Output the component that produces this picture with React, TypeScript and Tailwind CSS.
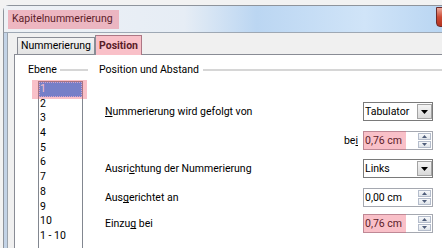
import { ReactNode } from "react";

function Mark({ className }: { className: string }) {
  return (
    <span
      className={`pointer-events-none absolute bg-[rgba(238,80,102,0.36)] ${className}`}
    />
  );
}

function Arrow({ up, color }: { up?: boolean; color: string }) {
  return (
    <svg width="5" height="3" viewBox="0 0 5 3">
      <path d={up ? "M0 3h5L2.5 0z" : "M0 0h5L2.5 3z"} fill={color} />
    </svg>
  );
}

function Combo({ value }: { value: string }) {
  return (
    <div className="flex h-[19px] w-[70px] items-center border border-[#7a7a7a] bg-white pl-px">
      <span className="flex-1">{value}</span>
      <span className="flex h-[15px] w-[15px] items-center justify-center border border-[#a3a3a3] bg-[linear-gradient(#f4f4f4,#d9d9d9)]">
        <svg width="7" height="4" viewBox="0 0 7 4">
          <path d="M0 0h7L3.5 4z" fill="#000" />
        </svg>
      </span>
    </div>
  );
}

function Spin({ value, marked }: { value: string; marked?: boolean }) {
  return (
    <div className="relative flex h-[19px] w-[70px] items-center border border-[#a5a8b0] bg-white pl-px">
      <span className="flex-1">{value}</span>
      <span className="mr-px flex w-[13px] flex-col gap-px">
        <span className="flex h-[7px] items-center justify-center border border-[#b4bccb] bg-[linear-gradient(#f8f9fb,#dfe4ea)]">
          <Arrow up color="#4f5d7a" />
        </span>
        <span className="flex h-[7px] items-center justify-center border border-[#b4bccb] bg-[linear-gradient(#f8f9fb,#dfe4ea)]">
          <Arrow color="#4f5d7a" />
        </span>
      </span>
      {marked && <Mark className="-left-px -top-px -bottom-px w-[43px]" />}
    </div>
  );
}

function Row({ label, children, className }: { label: ReactNode; children: ReactNode; className: string }) {
  return (
    <div className={`flex h-[19px] items-center justify-between ${className}`}>
      <span>{label}</span>
      {children}
    </div>
  );
}

// mnemonic letter, underline drawn through descenders like the native dialog
function Key({ children }: { children: string }) {
  return <span className="underline [text-decoration-skip-ink:none]">{children}</span>;
}

const levels = ["1", "2", "3", "4", "5", "6", "7", "8", "9", "10", "1 - 10"];

export default function App() {
  return (
    <div className="h-[248px] w-[442px] overflow-hidden bg-[#f2f2f2] pl-[3px] pt-[5px] font-['Roboto','Liberation_Sans',sans-serif] text-[10.5px] text-black">
      <div className="flex h-[260px] w-[452px] flex-col rounded-tl-[6px] border-l border-t border-[#8e949c] bg-[#c8d7e8]">
        {/* title bar */}
        <div className="flex h-[27px] shrink-0 items-center border-b border-[#9ea8b4] bg-[linear-gradient(90deg,#eef1f5_0%,#e6edf5_40%,#bbd6f2_56%,#d0e4f8_80%,#b5d3f1_100%)] pl-[8px]">
          <span className="relative leading-4">
            Kapitelnummerierung
            <Mark className="-left-[4px] -right-[6px] -top-[1px] -bottom-[2px]" />
          </span>
          <span className="mb-auto ml-auto mt-[1px] h-[20px] w-[19px] rounded-b-[4px] border border-[#6b2b2b] bg-[linear-gradient(#eaa99b,#cc4a35_50%,#b3321f)]" />
        </div>

        <div className="flex flex-1">
          <div className="w-[3px] bg-[#c3d3e6]" />
          <div className="w-px bg-[#9aa3ad]" />
          <div className="flex flex-1 flex-col bg-[#f0f0f0] pl-[6px] pt-[2px]">
            {/* tabs */}
            <div className="-mb-px flex h-[20px] items-end pl-[3px]">
              <div className="mb-px flex h-[17px] w-[78px] items-center justify-center border border-b-0 border-[#898c95] bg-[linear-gradient(#f3f3f3,#e3e3e3)]">
                Nummerierung
              </div>
              <div className="relative z-10 flex h-[20px] w-[47px] items-center justify-center border border-b-0 border-[#898c95] bg-white font-bold">
                Position
                <Mark className="-top-px -right-px bottom-0 left-0" />
              </div>
            </div>

            {/* tab page */}
            <div className="flex flex-1 border-l border-t border-[#898c95] bg-white pl-[13px] pt-[7px]">
              <div className="flex w-[60px] shrink-0 flex-col">
                <div className="flex h-4 items-center gap-[3px]">
                  Ebene
                  <div className="h-[2px] flex-1 bg-[#d6d6d6]" />
                </div>
                <div className="relative ml-[10px] mt-[3px] h-[200px] w-[45px] shrink-0 border border-[#828790] bg-white">
                  {levels.map((l, i) => (
                    <div
                      key={l}
                      className={`h-[14.7px] pl-px leading-[14.7px] ${
                        i === 0
                          ? "bg-[#3399ff] text-white outline-1 -outline-offset-1 outline-dotted outline-[#c8d0ff]"
                          : ""
                      }`}
                    >
                      {l}
                    </div>
                  ))}
                  <Mark className="-left-[7px] -top-[2px] h-[19px] w-[55px]" />
                </div>
              </div>

              <div className="ml-[11px] flex flex-1 flex-col">
                <div className="flex h-4 items-center gap-[4px]">
                  Position und Abstand
                  <div className="h-[2px] flex-1 bg-[#d6d6d6]" />
                </div>
                <div className="flex w-[334px] flex-col pl-[6px]">
                  <Row
                    className="mt-[24px]"
                    label={
                      <>
                        <Key>N</Key>ummerierung wird gefolgt von
                      </>
                    }
                  >
                    <Combo value="Tabulator" />
                  </Row>
                  <div className="mt-[10px] flex h-[19px] items-center justify-end gap-[5px]">
                    <span>
                      be<Key>i</Key>
                    </span>
                    <Spin value="0,76 cm" marked />
                  </div>
                  <Row
                    className="mt-[9px]"
                    label={
                      <>
                        Ausri<Key>c</Key>htung der Nummerierung
                      </>
                    }
                  >
                    <Combo value="Links" />
                  </Row>
                  <Row
                    className="mt-[10px]"
                    label={
                      <>
                        Aus<Key>g</Key>erichtet an
                      </>
                    }
                  >
                    <Spin value="0,00 cm" />
                  </Row>
                  <Row
                    className="mt-[7px]"
                    label={
                      <>
                        Einzu<Key>g</Key> bei
                      </>
                    }
                  >
                    <Spin value="0,76 cm" marked />
                  </Row>
                </div>
              </div>
            </div>
          </div>
        </div>
      </div>
    </div>
  );
}
